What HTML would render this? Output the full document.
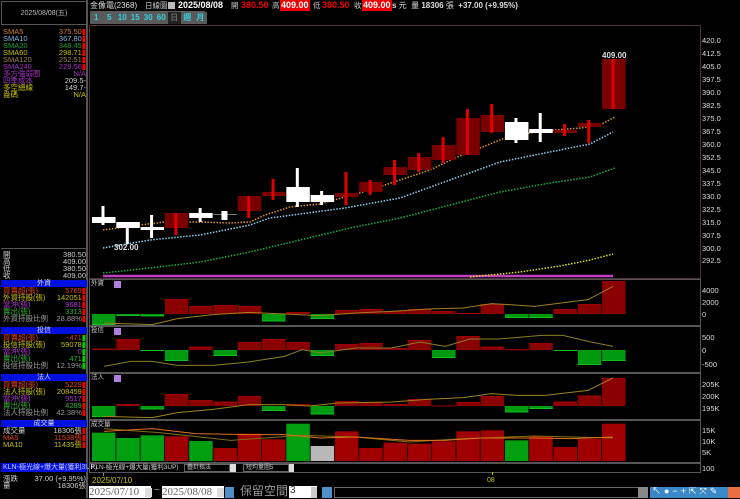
<!DOCTYPE html>
<html><head><meta charset="utf-8">
<style>
*{margin:0;padding:0;box-sizing:border-box}
body{width:740px;height:498px;background:#000;overflow:hidden;position:relative;font-family:"Liberation Sans","Noto Sans CJK TC",sans-serif;font-size:8px;color:#ccc}
.a{position:absolute;white-space:nowrap;line-height:1}
.r{display:flex;justify-content:space-between;position:absolute;left:3px;width:83px;font-size:7.5px;line-height:7px;height:7px}
.hd{position:absolute;left:1px;width:86px;height:7px;background:#0010e0;color:#ddd;font-size:7px;text-align:center;line-height:7px}
.btn{display:inline-block;width:12.5px;height:12px;background:#5a5a5a;color:#30d0e0;font-size:8px;text-align:center;line-height:12px;margin-right:0.5px;font-weight:bold}
.ax{position:absolute;left:702px;font-size:7.5px;color:#ddd;line-height:1}
</style></head><body>
<!-- left panel -->
<div class="a" style="left:0;top:0;width:88px;height:498px;border-right:2px solid #555"></div>
<div class="a" style="left:1px;top:1px;width:86px;height:24px;border:1px solid #555;color:#bbb;font-size:7px;text-align:center;line-height:24px">2025/08/08(五)</div>
<div class="r" style="top:28px;color:#d08030"><span>SMA5</span><span>375.50<b style="color:#e00">▮</b></span></div>
<div class="r" style="top:35px;color:#80b8e0"><span>SMA10</span><span>367.80<b style="color:#e00">▮</b></span></div>
<div class="r" style="top:42px;color:#20a030"><span>SMA20</span><span>348.45<b style="color:#e00">▮</b></span></div>
<div class="r" style="top:49px;color:#c8c000"><span>SMA60</span><span>298.71<b style="color:#e00">▮</b></span></div>
<div class="r" style="top:56px;color:#a08050"><span>SMA120</span><span>252.51<b style="color:#e00">▮</b></span></div>
<div class="r" style="top:63px;color:#a030c0"><span>SMA240</span><span>229.56<b style="color:#e00">▮</b></span></div>
<div class="r" style="top:70px;color:#a030c0"><span>多方強弱圈</span><span>N/A</span></div>
<div class="r" style="top:77px;color:#a030c0"><span>四季成本</span><span style="color:#ccc">209.5-</span></div>
<div class="r" style="top:84px;color:#c8c000"><span>多空總線</span><span style="color:#ccc">149.7-</span></div>
<div class="r" style="top:91px;color:#c8c000"><span>盎碼</span><span>N/A</span></div>
<div class="a" style="left:1px;top:248px;width:86px;border-top:1px solid #555"></div>
<div class="r" style="top:251px"><span>開</span><span>380.50</span></div>
<div class="r" style="top:258px"><span>高</span><span>409.00</span></div>
<div class="r" style="top:265px"><span>低</span><span>380.50</span></div>
<div class="r" style="top:272px"><span>收</span><span>409.00</span></div>

<div class="hd" style="top:280px">外資</div>
<div class="r" style="top:287px;color:#e04020"><span>買賣超(張)</span><span>5769<b style="color:#e00">▮</b></span></div>
<div class="r" style="top:294px;color:#c8c000"><span>外資持股(張)</span><span>142051<b style="color:#e00">▮</b></span></div>
<div class="r" style="top:301px;color:#b030d0"><span>當沖(張)</span><span>9681<b style="color:#e00">▮</b></span></div>
<div class="r" style="top:308px;color:#30b030"><span>賣出(張)</span><span>3313<b style="color:#e00">▮</b></span></div>
<div class="r" style="top:315px;color:#999"><span>外資持股比例</span><span>28.88%<b style="color:#e00">▮</b></span></div>
<div class="hd" style="top:327px">投信</div>
<div class="r" style="top:334px;color:#e04020"><span>買賣超(張)</span><span>-471<b style="color:#0c0">▮</b></span></div>
<div class="r" style="top:341px;color:#c8c000"><span>投信持股(張)</span><span>59078<b style="color:#0c0">▮</b></span></div>
<div class="r" style="top:348px;color:#b030d0"><span>當沖(張)</span><span>0<b style="color:#0c0">▮</b></span></div>
<div class="r" style="top:355px;color:#30b030"><span>賣出(張)</span><span>471<b style="color:#0c0">▮</b></span></div>
<div class="r" style="top:362px;color:#999"><span>投信持股比例</span><span>12.19%<b style="color:#0c0">▮</b></span></div>
<div class="hd" style="top:374px">法人</div>
<div class="r" style="top:381px;color:#e04020"><span>買賣超(張)</span><span>5229<b style="color:#e00">▮</b></span></div>
<div class="r" style="top:388px;color:#c8c000"><span>法人持股(張)</span><span>208459<b style="color:#e00">▮</b></span></div>
<div class="r" style="top:395px;color:#b030d0"><span>當沖(張)</span><span>9517<b style="color:#e00">▮</b></span></div>
<div class="r" style="top:402px;color:#30b030"><span>賣出(張)</span><span>4289<b style="color:#e00">▮</b></span></div>
<div class="r" style="top:409px;color:#999"><span>法人持股比例</span><span>42.38%<b style="color:#e00">▮</b></span></div>
<div class="hd" style="top:420px">成交量</div>
<div class="r" style="top:427px;color:#ccc"><span>成交量</span><span>18306張<b style="color:#e00">▮</b></span></div>
<div class="r" style="top:434px;color:#e04020"><span>MA5</span><span>11538張<b style="color:#e00">▮</b></span></div>
<div class="r" style="top:441px;color:#c8c000"><span>MA10</span><span>11435張<b style="color:#e00">▮</b></span></div>
<div class="a" style="left:1px;top:463px;width:86px;height:9px;background:#0010e0;color:#c8c8ff;font-size:7px;line-height:9px;padding-left:2px">KLN-極光線+爆大量(獲利3UP)</div>
<div class="r" style="top:475px"><span>漲跌</span><span>37.00 (+9.95%)</span></div>
<div class="r" style="top:482px"><span>量</span><span>18306張</span></div>

<!-- top bar -->
<div class="a" style="left:90px;top:2px;font-size:8px;color:#ddd">金像電(2368)</div>
<div class="a" style="left:145px;top:2px;font-size:7.5px;color:#ccc">日線圖</div>
<div class="a" style="left:168px;top:2px;width:7px;height:7px;background:#bbb"></div>
<div class="a" style="left:178px;top:1px;font-size:9px;font-weight:bold;color:#fff">2025/08/08</div>
<div class="a" style="left:231px;top:2px;font-size:7.5px;color:#ccc">開</div>
<div class="a" style="left:241px;top:1px;font-size:9px;font-weight:bold;color:#e00">380.50</div>
<div class="a" style="left:272px;top:2px;font-size:7.5px;color:#ccc">高</div>
<div class="a" style="left:280px;top:0px;height:11px;padding:1px 1px;background:#e00;font-size:9px;font-weight:bold;color:#fff">409.00</div>
<div class="a" style="left:313px;top:2px;font-size:7.5px;color:#ccc">低</div>
<div class="a" style="left:322px;top:1px;font-size:9px;font-weight:bold;color:#e00">380.50</div>
<div class="a" style="left:354px;top:2px;font-size:7.5px;color:#ccc">收</div>
<div class="a" style="left:362px;top:0px;height:11px;padding:1px 1px;background:#e00;font-size:9px;font-weight:bold;color:#fff">409.00</div>
<div class="a" style="left:392px;top:2px;font-size:8px;color:#ddd"><b>s</b> 元 &nbsp;量 <b>18306</b> 張 &nbsp;<b>+37.00 (+9.95%)</b></div>
<div class="a" style="left:90px;top:11px;height:13px;background:#5a5a5a;width:115px"></div>
<div class="a" style="left:90px;top:12px;font-size:0">
<span class="btn">1</span><span class="btn">5</span><span class="btn">10</span><span class="btn">15</span><span class="btn">30</span><span class="btn">60</span><span class="btn" style="background:#222;color:#666">日</span><span class="btn">週</span><span class="btn">月</span></div>

<!-- chart frames -->
<div class="a" style="left:89px;top:25px;width:612px;height:254px;border:1px solid #503040"></div>
<div class="a" style="left:89px;top:279px;width:612px;height:47px;border:1px solid #555"></div>
<div class="a" style="left:89px;top:326px;width:612px;height:47px;border:1px solid #555"></div>
<div class="a" style="left:89px;top:373px;width:612px;height:47px;border:1px solid #555"></div>
<div class="a" style="left:89px;top:420px;width:612px;height:43px;border:1px solid #555"></div>
<div class="a" style="left:89px;top:463px;width:612px;height:10px;border:1px solid #555"></div>
<svg class="a" style="left:0;top:0" width="740" height="498" id="sv"></svg>
<div class="a" style="left:91px;top:281px;font-size:6.5px;color:#ccc">外資</div>
<div class="a" style="left:91px;top:328px;font-size:6.5px;color:#ccc">投信</div>
<div class="a" style="left:91px;top:375px;font-size:6.5px;color:#ccc">法人</div>
<div class="a" style="left:91px;top:422px;font-size:6.5px;color:#ccc">成交量</div>
<div class="a" style="left:114px;top:281px;width:7px;height:7px;background:#b080e0"></div>
<div class="a" style="left:114px;top:328px;width:7px;height:7px;background:#b080e0"></div>
<div class="a" style="left:114px;top:375px;width:7px;height:7px;background:#b080e0"></div>
<div class="a" style="left:91px;top:465px;font-size:6.5px;color:#ccc">KLN-極光線+爆大量(獲利3UP)</div>
<div class="a" style="left:184px;top:464px;width:46px;height:8px;border:1px solid #666;font-size:6px;color:#ccc;padding-left:2px">疊針指法</div>
<div class="a" style="left:230px;top:464px;width:6px;height:8px;background:#ddd"></div>
<div class="a" style="left:243px;top:464px;width:46px;height:8px;border:1px solid #666;font-size:6px;color:#ccc;padding-left:2px">短均量圖5</div>
<div class="a" style="left:289px;top:464px;width:5px;height:8px;background:#ddd"></div>

<!-- axis labels -->
<div class="ax" style="top:37px">420.0</div><div class="ax" style="top:50px">412.5</div>
<div class="ax" style="top:63px">405.0</div><div class="ax" style="top:76px">397.5</div>
<div class="ax" style="top:89px">390.0</div><div class="ax" style="top:102px">382.5</div>
<div class="ax" style="top:115px">375.0</div><div class="ax" style="top:128px">367.5</div>
<div class="ax" style="top:141px">360.0</div><div class="ax" style="top:154px">352.5</div>
<div class="ax" style="top:167px">345.0</div><div class="ax" style="top:180px">337.5</div>
<div class="ax" style="top:193px">330.0</div><div class="ax" style="top:206px">322.5</div>
<div class="ax" style="top:219px">315.0</div><div class="ax" style="top:232px">307.5</div>
<div class="ax" style="top:245px">300.0</div><div class="ax" style="top:257px">292.5</div>
<div class="ax" style="top:287px">4000</div><div class="ax" style="top:299px">2000</div><div class="ax" style="top:311px">0</div>
<div class="ax" style="top:334px">500</div><div class="ax" style="top:347px">0</div><div class="ax" style="top:361px">-500</div>
<div class="ax" style="top:381px">205K</div><div class="ax" style="top:393px">200K</div><div class="ax" style="top:405px">195K</div>
<div class="ax" style="top:427px">15K</div><div class="ax" style="top:438px">10K</div><div class="ax" style="top:449px">5K</div>
<div class="ax" style="top:465px">100</div>
<div class="a" style="left:114px;top:244px;font-size:8px;font-weight:bold;color:#ddd">302.00</div>
<div class="a" style="left:602px;top:52px;font-size:8px;font-weight:bold;color:#ddd">409.00</div>

<!-- date row -->
<div class="a" style="left:103px;top:473px;width:1px;height:3px;background:#888"></div>
<div class="a" style="left:92px;top:477px;font-size:8px;color:#c8c000">2025/07/10</div>
<div class="a" style="left:492px;top:472px;width:1px;height:3px;background:#c8c000"></div>
<div class="a" style="left:487px;top:477px;font-size:7px;color:#c8c000">08</div>

<!-- bottom controls -->
<div class="a" style="left:89px;top:486px;width:62px;height:12px;background:#fff;color:#666;font-size:11px;line-height:13px;font-family:'Liberation Serif',serif">2025/07/10</div>
<div class="a" style="left:145px;top:488px;width:7px;height:9px;background:#ddd"></div>
<div class="a" style="left:154px;top:486px;color:#aaa;font-size:10px">~</div>
<div class="a" style="left:162px;top:486px;width:62px;height:12px;background:#fff;color:#666;font-size:11px;line-height:13px;font-family:'Liberation Serif',serif">2025/08/08</div>
<div class="a" style="left:217px;top:488px;width:7px;height:9px;background:#ddd"></div>
<div class="a" style="left:225px;top:487px;width:9px;height:11px;background:#5090c8"></div>
<div class="a" style="left:240px;top:485px;color:#999;font-size:12px">保留空間</div>
<div class="a" style="left:289px;top:486px;width:28px;height:12px;background:#fff;color:#333;font-size:10px;padding-left:1px">3</div>
<div class="a" style="left:311px;top:487px;width:6px;height:11px;background:#ccc"></div>
<div class="a" style="left:322px;top:487px;width:10px;height:11px;background:#5090c8"></div>
<div class="a" style="left:334px;top:487px;width:314px;height:11px;background:#000;border:1px solid #666"></div>
<div class="a" style="left:638px;top:487px;width:10px;height:11px;background:#888"></div>
<div class="a" style="left:650px;top:487px;width:78px;height:11px;background:#3a88c8"></div>
<div class="a" style="left:728px;top:487px;width:12px;height:11px;background:#e87040"></div>
<div class="a" style="left:652px;top:487px;font-size:9px;color:#fff;letter-spacing:3px">↖●−+⇱⤧✎</div>

<script>
var s=document.getElementById('sv'),h='';
function R(x,y,w,hh,c){if(hh<0){y+=hh;hh=-hh}h+='<rect x="'+x+'" y="'+y+'" width="'+w+'" height="'+Math.max(hh,1)+'" fill="'+c+'"/>';}
function X(i){return 92+24.29*i}
function L(pts,c,dash,w){h+='<polyline fill="none" stroke="'+c+'" stroke-width="'+(w||1)+'" '+(dash?'stroke-dasharray="1.5 1.5"':'')+' points="'+pts.map(function(p){return p.join(',')}).join(' ')+'"/>';}
var C=[['w',217,223,206,225],['w',222,228,222,244],['w',227,230,215,238],['r',213,228,213,235],['w',213,218,208,222],['g',212,220,211,220],['r',196,211,196,218],['r',192,196,179,200],['w',187,202,168,207],['w',195,202,191,205],['r',193,197,172,205],['r',182,192,180,195],['r',167,175,160,185],['r',157,170,153,172],['r',145,160,137,163],['r',118,155,109,155],['r',115,132,104,133],['w',122,140,118,143],['w',129,133,113,142],['r',130,133,124,136],['r',123,127,120,143],['r',59,109,59,109]];
// MA lines
L([[103,276],[613,276]],'#c040c0',0,2.5);
L([[103,273],[150,268],[200,262],[250,252],[300,240],[350,228],[400,218],[450,205],[500,192],[550,183],[590,177],[615,168]],'#20b040',1,1.5);
L([[470,277],[520,272],[560,266],[590,260],[613,254]],'#e0e020',1,1.5);
L([[103,248],[150,240],[200,235],[250,225],[270,218],[300,214],[345,208],[400,198],[450,180],[500,162],[550,152],[590,144],[613,132]],'#90d0f0',1,1.5);
L([[103,230],[140,225],[165,222],[200,222],[230,223],[250,222],[265,215],[290,207],[320,204],[345,197],[370,190],[400,180],[430,170],[455,158],[480,148],[505,138],[530,133],[555,130],[580,128],[600,125],[615,117]],'#e09030',1,1.5);
C.forEach(function(c,i){var x=X(i),cx=x+11;
 if(c[0]=='w'){R(cx-1.5,c[3],3,c[4]-c[3],'#fff');R(x,c[1],23.5,c[2]-c[1],'#fff');}
 else if(c[0]=='g'){R(x,214,23.5,1,'#777');R(cx-3,c[3],6,c[4]-c[3],'#fff');}
 else{R(x,c[1],23.5,c[2]-c[1],'#7a0000');R(cx-1.5,c[3],3,c[4]-c[3],'#e00000');}
});
function P(z,data,s,sc){data.forEach(function(v,i){if(v==0)return;var col=v>0?'#8a0000':'#009a10';R(X(i),z,23.5,-v*sc,col);R(X(i),v>0?z-v*sc:z+(-v*sc)-1,23.5,1,v>0?'#a00000':'#10c020');});}
function ML(base,pts,c){L(pts.map(function(p){return [88+p[0]/2.8,base+p[1]/3]}),c,0,1);}
// 外資
var z=314;P(z,[-11,-2,-2.3,15,8,9,8,-7.5,2,-5,4,5,3,5,3,1,10,-4,-4,5,10,33],0,1);
ML(278,[[45,135],[180,140],[250,122],[350,110],[450,103],[550,108],[650,113],[750,105],[850,100],[950,93],[1050,90],[1130,77],[1180,80],[1250,85],[1400,65],[1470,25]],'#a08020');
// 投信
z=350;P(z,[1.5,11,-1,-11,3.5,-6,8,11,8,-6,6,7,2,10,-8,14,3.5,0.8,7,-1,-15,-11],0,1);
ML(278,[[45,265],[120,250],[180,250],[250,262],[350,262],[450,252],[550,235],[600,215],[650,225],[750,210],[850,210],[930,192],[1000,205],[1070,183],[1150,183],[1270,172],[1330,172],[1400,190],[1470,205]],'#8a8020');
// 法人
z=406;P(z,[-11,2,-3.5,12,6,4.5,10,-5,2,-8.5,5,4,2,7,0.5,4,10,-6.5,-3,4.5,10.5,28],0,1);
ML(372,[[45,133],[180,137],[250,122],[350,112],[450,98],[550,98],[620,102],[700,93],[850,90],[950,82],[1050,77],[1130,65],[1200,70],[1280,70],[1400,55],[1470,18]],'#a08020');
// 成交量
var tops=[182,198,190,193,207,228,185,202,155,222,178,228,212,215,208,178,175,205,193,225,200,155];
var cols='ggg rgrrgwrrrrrrrgrrrr'.replace(' ','').split('');
cols=['g','g','g','r','g','r','r','r','g','w','r','r','r','r','r','r','r','g','r','r','r','r'];
tops.forEach(function(t,i){var y=372+t/3;var c=cols[i]=='g'?'#00a010':cols[i]=='w'?'#b8b8b8':'#a00000';R(X(i),y,23.5,461-y,c);});
ML(372,[[45,170],[200,182],[400,205],[600,190],[750,195],[900,210],[1050,200],[1250,192],[1470,198]],'#807010');
ML(372,[[45,178],[180,170],[300,185],[450,188],[550,188],[650,198],[750,195],[900,205],[1000,205],[1100,198],[1250,198],[1350,200],[1470,195]],'#e07020');
s.innerHTML=h;
</script>
</body></html>
